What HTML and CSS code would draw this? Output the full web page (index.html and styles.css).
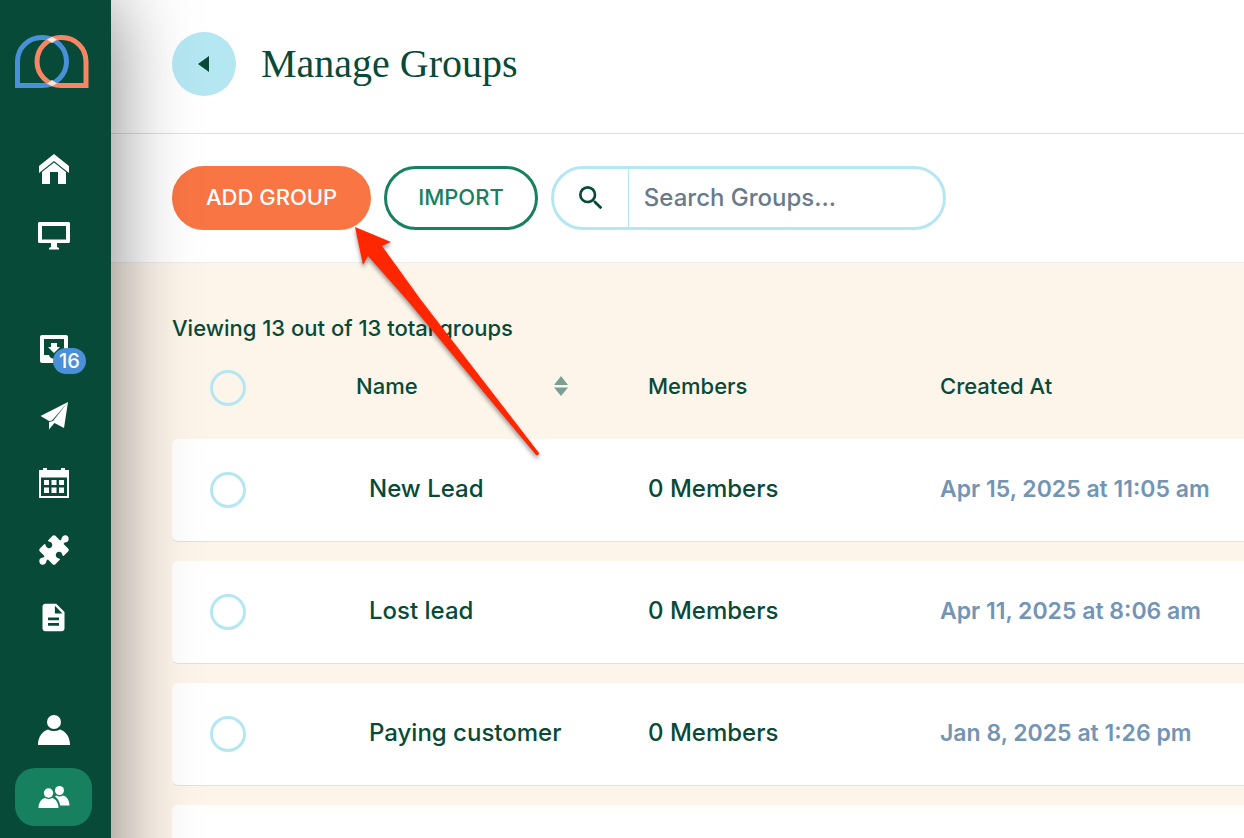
FILE: index.html
```html
<!DOCTYPE html>
<html lang="en">
<head>
    <meta charset="UTF-8">
    <meta name="viewport" content="width=device-width, initial-scale=1.0">
    <title>Manage Groups</title>
    <link rel="stylesheet" href="styles.css">
</head>
<body>

<div class="app">
    <aside class="sidebar">
        <a class="logo" href="#" aria-label="Dashboard">
            <svg width="74" height="53" viewBox="0 0 74 53" fill="none" stroke-width="5">
                <path stroke="#4a90d9" d="M2.5 50.5V26.500a24 24 0 0 1 24-24h1a24 24 0 0 1 0 48z"/>
                <path stroke="#fa8563" d="M71 50.5V26.500a24 24 0 0 0-24-24h-1a24 24 0 0 0 0 48z"/>
                <path fill="#ebe9e4" d="M37 2l5 2.500-5 3.500-5-3.500zM37 45l5 3.500-5 2.500-5-2.500z"/>
            </svg>
        </a>

        <nav class="nav">
            <div class="nav-group">
                <a class="nav-item" href="#" aria-label="Home">
                    <svg width="32" height="32" viewBox="0 0 32 32"><path d="M16 1l15 12v7L16 8 1 20v-7zM16 9.500l12 9.500V31h-8V19h-8v12H4V19z"/></svg>
                </a>
                <a class="nav-item" href="#" aria-label="Website">
                    <svg width="32" height="32" viewBox="0 0 32 32"><path fill-rule="evenodd" d="M1 2h30l1 1v19l-1 1H1l-1-1V3zM4 6v13.500h24V6zM13 23h6v4l2 1v1.500H11V28l2-1z"/></svg>
                </a>
            </div>

            <div class="nav-group">
                <a class="nav-item" href="#" aria-label="Inbox">
                    <svg width="32" height="32" viewBox="0 0 32 32"><path fill-rule="evenodd" d="M4 2h22a2 2 0 0 1 2 2v24a2 2 0 0 1-2 2H2a2 2 0 0 1-2-2V4a2 2 0 0 1 2-2zM4 6v16h5c1 5 9 5 10 0h5V6zM11 10h6v4h3l-6 6-6-6h3z" transform="translate(2)"/></svg>
                    <span class="badge">16</span>
                </a>
                <a class="nav-item" href="#" aria-label="Campaigns">
                    <svg width="32" height="32" viewBox="0 0 32 32"><path d="M2.500 16L30 2 14 20.500l-3 .5zM30 2l-4 26-9.500-5L11 29.500V22l4-1z"/></svg>
                </a>
                <a class="nav-item" href="#" aria-label="Calendar">
                    <svg width="32" height="32" viewBox="0 0 32 32"><path fill-rule="evenodd" d="M5 1h4v2h14V1h4v2h4v28H1V3h4zM3 10.500V29h26V10.500z"/><path d="M6 13h5v5H6zM13.500 13h5v5h-5zM21 13h5v5h-5zM6 20.500h5v5.500H6zM13.500 20.500h5v5.500h-5zM21 20.500h5v5.500h-5z"/></svg>
                </a>
                <a class="nav-item" href="#" aria-label="Integrations">
                    <svg width="32" height="32" viewBox="-16 -16 32 32"><path transform="rotate(45)" d="M-11-9Q-11-11-9-11H-2.500Q-1.500-12-3-14A3.500 3.500 0 1 1 3-14Q1.500-12 2.500-11H9Q11-11 11-9V-2.500Q10-1.500 8.500-3A3.300 3.300 0 1 0 8.500 3Q10 1.500 11 2.500V9Q11 11 9 11H2.500Q1.500 12 3 14A3.500 3.500 0 1 1-3 14Q-1.500 12-2.500 11H-9Q-11 11-11 9V2.500Q-10 1.500-8.500 3A3.300 3.300 0 1 0-8.500-3Q-10-1.500-11-2.500z"/></svg>
                </a>
                <a class="nav-item" href="#" aria-label="Forms">
                    <svg width="33" height="33" viewBox="0 0 24 24"><path d="M14 2H6c-1.100 0-2 .9-2 2v16c0 1.100.9 2 2 2h12c1.100 0 2-.9 2-2V8zm2 16H8v-2h8zm0-4H8v-2h8zm-3-5V3.500L18.500 9z"/></svg>
                </a>
            </div>

            <div class="nav-group">
                <a class="nav-item" href="#" aria-label="Contacts">
                    <svg width="32" height="32" viewBox="0 0 32 32"><circle cx="16" cy="8" r="7"/><path d="M0 31C0 22 5 17 10 15.500q6 3 12 0C27 17 32 22 32 31z"/></svg>
                </a>
                <a class="nav-item active" href="#" aria-label="Groups">
                    <svg width="32" height="32" viewBox="0 0 32 32"><circle cx="21.500" cy="9.500" r="4.500"/><path d="M17 15.500l1.500-1q3 2 6.500 0c4 1 6.500 5 6.500 10H22q-.5-6-5-9z"/><circle cx="10.500" cy="12" r="4.700"/><path d="M.5 27c0-5 2.500-9 6.500-10q3.500 2 7 0c4 1 6.500 5 6.500 10z"/></svg>
                </a>
            </div>
        </nav>
    </aside>

    <main class="main">
        <header class="header">
            <button class="back-btn" type="button" aria-label="Back">
                <svg width="12" height="18" viewBox="0 0 12 18"><path d="M11 1v16L0 9z"/></svg>
            </button>
            <h1>Manage Groups</h1>
        </header>

        <div class="toolbar">
            <button class="btn btn-add" type="button">ADD GROUP</button>
            <button class="btn btn-import" type="button">IMPORT</button>
            <div class="search">
                <label class="search-icon" for="search" aria-label="Search groups">
                    <svg width="32" height="32" viewBox="0 0 24 24"><path d="M15.500 14h-.79l-.28-.27A6.470 6.470 0 0 0 16 9.500 6.500 6.500 0 1 0 9.500 16c1.610 0 3.090-.59 4.230-1.570l.27.28v.79l5 4.990L20.490 19zm-6 0a4.500 4.500 0 1 1 0-9 4.500 4.500 0 0 1 0 9z"/></svg>
                </label>
                <input id="search" type="text" placeholder="Search Groups...">
            </div>
        </div>

        <section class="content">
            <p class="summary">Viewing 13 out of 13 total groups</p>
            <table class="groups">
                <colgroup>
                    <col class="col-check">
                    <col class="col-data">
                    <col class="col-data">
                    <col>
                </colgroup>
                <thead>
                    <tr>
                        <th class="check"><input type="checkbox" aria-label="Select all groups"></th>
                        <th>
                            <button class="sort" type="button">Name
                                <svg width="14" height="20" viewBox="0 0 14 20"><path d="M7 0l7 9H0zM0 11.500h14L7 20z"/></svg>
                            </button>
                        </th>
                        <th>Members</th>
                        <th>Created At</th>
                    </tr>
                </thead>
                <tbody>
                    <tr>
                        <td class="check"><input type="checkbox" aria-label="Select New Lead"></td>
                        <td class="name">New Lead</td>
                        <td>0 Members</td>
                        <td class="date">Apr 15, 2025 at 11:05 am</td>
                    </tr>
                    <tr>
                        <td class="check"><input type="checkbox" aria-label="Select Lost lead"></td>
                        <td class="name">Lost lead</td>
                        <td>0 Members</td>
                        <td class="date">Apr 11, 2025 at 8:06 am</td>
                    </tr>
                    <tr>
                        <td class="check"><input type="checkbox" aria-label="Select Paying customer"></td>
                        <td class="name">Paying customer</td>
                        <td>0 Members</td>
                        <td class="date">Jan 8, 2025 at 1:26 pm</td>
                    </tr>
                    <tr>
                        <td class="check"></td>
                        <td class="name"></td>
                        <td></td>
                        <td class="date"></td>
                    </tr>
                </tbody>
            </table>
        </section>
    </main>

    <!-- pointer to the add button -->
    <svg class="arrow" width="190" height="235" viewBox="0 0 190 235">
        <path d="M1 2L37 17l-9 4 39 54L185 228q0 3-3 2L53 75 14 31 9 40z"/>
    </svg>
</div>

</body>
</html>
```
FILE: styles.css
```css
* {
    box-sizing: border-box;
}

body {
    margin: 0;
    height: 100vh;
    overflow: hidden;
    font-family: Inter, "Liberation Sans", sans-serif;
    font-weight: 500;
    color: #084a38;
    background-color: #fdf4ea;
}

button,
input {
    font-family: inherit;
    font-weight: inherit;
    margin: 0;
}

svg {
    display: block;
    fill: currentColor;
}

.app {
    position: relative;
    display: flex;
    min-height: 100vh;
}

/* sidebar */
.sidebar {
    position: relative;
    z-index: 2;
    flex: 0 0 111px;
    padding: 35px 19px 0 15px;
    background-color: #084a38;
    box-shadow: 0 0 80px rgba(0, 0, 0, 0.5);
}

.logo svg {
    fill: none;
}

.nav {
    display: flex;
    flex-direction: column;
    gap: 55px;
    margin-top: 52px;
}

.nav-group {
    display: flex;
    flex-direction: column;
    gap: 9px;
}

.nav-item {
    position: relative;
    display: flex;
    align-items: center;
    justify-content: center;
    height: 58px;
    border-radius: 20px;
    color: #ffffff;
}

.nav-item.active {
    background-color: #17805f;
}

.badge {
    position: absolute;
    top: 28px;
    left: 38px;
    width: 33px;
    border-radius: 13px;
    background-color: #4a90d9;
    font-size: 20px;
    line-height: 26px;
    text-align: center;
}

/* main */
.main {
    flex: 1;
    min-width: 0;
}

.header {
    display: flex;
    align-items: center;
    gap: 25px;
    padding: 32px 61px 37px;
    background-color: #ffffff;
    border-bottom: 1px solid #d9e2df;
}

.back-btn {
    display: flex;
    align-items: center;
    justify-content: center;
    width: 64px;
    height: 64px;
    padding: 0;
    border: none;
    border-radius: 50%;
    background-color: #b5e7f3;
    color: #084a38;
    cursor: pointer;
}

h1 {
    margin: 0;
    font-family: "Liberation Serif", serif;
    font-size: 40px;
    font-weight: 400;
    line-height: 64px;
}

.toolbar {
    display: flex;
    gap: 13px;
    padding: 32px 61px;
    background-color: #ffffff;
    border-bottom: 1px solid #e9efec;
}

.btn {
    height: 64px;
    padding: 0 31px 2px;
    border: 3px solid #17805f;
    border-radius: 32px;
    font-size: 22px;
    cursor: pointer;
}

.btn-add {
    border-color: #f97544;
    background-color: #f97544;
    color: #ffffff;
}

.btn-import {
    background-color: #ffffff;
    color: #17805f;
}

.search {
    display: flex;
    width: 395px;
    height: 64px;
    border: 3px solid #b5e7f3;
    border-radius: 32px;
    overflow: hidden;
}

.search-icon {
    display: flex;
    align-items: center;
    justify-content: center;
    flex: 0 0 75px;
    border-right: 1px solid #b5e7f3;
}

.search input {
    flex: 1;
    min-width: 0;
    padding: 0 15px 2px;
    border: none;
    outline: none;
    background: none;
    color: #084a38;
    font-size: 24px;
}

.search input::placeholder {
    color: #687a8c;
}

.content {
    padding: 53px 0 61px 61px;
}

.summary {
    margin: 0;
    font-size: 22px;
    line-height: 24px;
}

/* groups table */
.groups {
    width: 100%;
    table-layout: fixed;
    border-collapse: separate;
    border-spacing: 0 19px;
}

.col-check {
    width: 172px;
}

.col-data {
    width: 292px;
}

.groups th {
    height: 61px;
    padding: 0 0 7px 12px;
    font-size: 22px;
    font-weight: 500;
    text-align: left;
}

.groups td {
    height: 103px;
    padding: 0 0 3px 12px;
    background-color: #ffffff;
    border-bottom: 1px solid #dde3e1;
    font-size: 24px;
    white-space: nowrap;
}

.groups .check {
    padding-bottom: 4px;
    padding-left: 38px;
}

.groups td.check {
    padding-bottom: 1px;
    border-radius: 6px 0 0 6px;
}

.groups td.name {
    padding-left: 25px;
}

.groups td.date {
    color: #7394b5;
    font-size: 23px;
    font-weight: 600;
}

.check input {
    display: block;
    appearance: none;
    width: 36px;
    height: 36px;
    border: 3px solid #b5e7f3;
    border-radius: 50%;
    background-color: #ffffff;
}

th.check input {
    background-color: transparent;
}

.sort {
    display: flex;
    align-items: center;
    justify-content: space-between;
    width: 212px;
    padding: 0;
    border: none;
    background: none;
    color: inherit;
    font-size: 22px;
    cursor: pointer;
}

.sort svg {
    color: #7b9f94;
}

/* arrow drawn over the page */
.arrow {
    position: absolute;
    z-index: 3;
    top: 225px;
    left: 354px;
    color: #ff2600;
    filter: drop-shadow(0 3px 2px rgba(0, 0, 0, 0.4));
    pointer-events: none;
}
```
